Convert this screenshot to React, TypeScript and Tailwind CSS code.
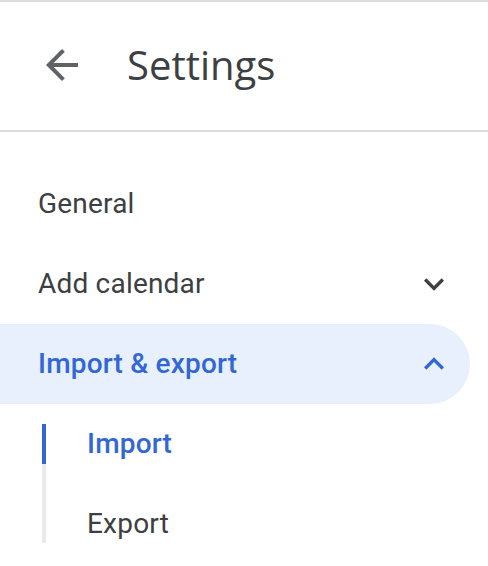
import React from "react";

function BackArrow() {
  return (
    <svg width="48" height="48" viewBox="0 0 24 24" className="fill-[#5f6368]">
      <path d="M20 11H7.83l5.59-5.59L12 4l-8 8 8 8 1.41-1.41L7.83 13H20v-2z" />
    </svg>
  );
}

function Chevron({ up, className }: { up?: boolean; className: string }) {
  return (
    <svg width="40" height="40" viewBox="0 0 24 24" className={className}>
      {up ? (
        <path d="M12 8l-6 6 1.41 1.41L12 10.83l4.59 4.58L18 14z" />
      ) : (
        <path d="M16.59 8.59L12 13.17 7.41 8.59 6 10l6 6 6-6z" />
      )}
    </svg>
  );
}

export default function App() {
  return (
    <div className="w-[488px] h-[566px] bg-white font-['Roboto',sans-serif] overflow-hidden">
      {/* header */}
      <div className="border-t-2 border-b-2 border-[#dadce0] h-[132px] flex items-center">
        <div className="ml-[38px] -mt-[2px]">
          <BackArrow />
        </div>
        <div className="ml-[41px] -mt-[2px] text-[40px] leading-[48px] text-[#3c4043] font-['Open_Sans',sans-serif]">
          Settings
        </div>
      </div>

      {/* nav */}
      <nav className="mt-[32px] text-[28px] tracking-[0.2px]">
        <div className="h-[80px] flex items-center pl-[38px] text-[#3c4043]">General</div>
        <div className="h-[80px] flex items-center justify-between pl-[38px] pr-[34px] text-[#3c4043]">
          <span>Add calendar</span>
          <Chevron className="fill-[#3c4043]" />
        </div>
        <div className="h-[80px] w-[470px] rounded-r-full bg-[#e8f0fe] flex items-center justify-between pl-[38px] pr-[16px] font-medium text-[#3367d6]">
          <span>Import &amp; export</span>
          <Chevron up className="fill-[#3367d6]" />
        </div>

        {/* sub items */}
        <div className="pl-[42px]">
          <div className="h-[80px] flex">
            <div className="w-[4px] flex flex-col">
              <div className="h-[20px]" />
              <div className="h-[40px] bg-[#3367d6]" />
              <div className="flex-1 bg-[#e8eaed]" />
            </div>
            <div className="flex items-center pl-[41px] font-medium text-[#3367d6]">Import</div>
          </div>
          <div className="h-[80px] flex">
            <div className="w-[4px] flex flex-col">
              <div className="h-[59px] bg-[#e8eaed]" />
            </div>
            <div className="flex items-center pl-[41px] text-[#3c4043]">Export</div>
          </div>
        </div>
      </nav>
    </div>
  );
}
